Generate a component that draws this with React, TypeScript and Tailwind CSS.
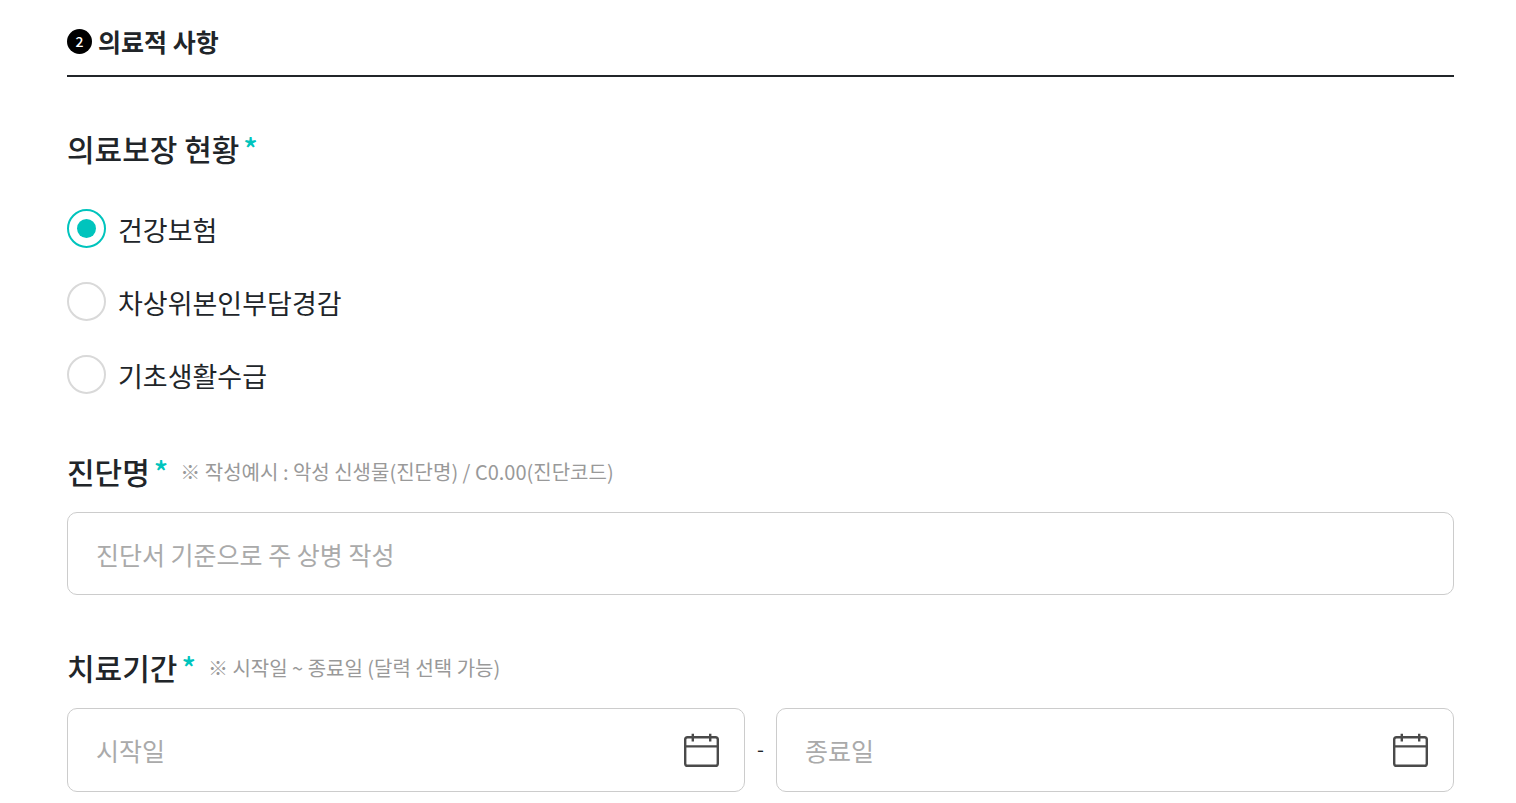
import { useState } from 'react';

const COVERAGE_OPTIONS = [
  { value: 'health', label: '건강보험' },
  { value: 'near-poor', label: '차상위본인부담경감' },
  { value: 'basic', label: '기초생활수급' },
];

function Required() {
  return <span className="ml-1 text-[#00c4bd]">*</span>;
}

function CalendarIcon() {
  return (
    <svg width="36" height="34" viewBox="0 0 36 34" fill="none" stroke="#4a4a4a" strokeWidth="2.4" aria-hidden="true">
      <rect x="1.2" y="4.2" width="32.6" height="28.6" rx="2.4" />
      <path d="M1 13.4H34M8.8 0.8V8.4M26.2 0.8V8.4" />
    </svg>
  );
}

function DateField({ id, placeholder }: { id: string; placeholder: string }) {
  const [value, setValue] = useState('');

  return (
    <div className="flex h-[84px] min-w-0 flex-1 items-center rounded-[10px] border border-[#ccc] pr-6 pl-7">
      <input
        id={id}
        type="text"
        aria-label={placeholder}
        placeholder={placeholder}
        value={value}
        onChange={(e) => setValue(e.target.value)}
        className="h-full min-w-0 flex-1 text-[25px] outline-none placeholder:text-[#aaa]"
      />
      <button type="button" aria-label={`${placeholder} 달력`}>
        <CalendarIcon />
      </button>
    </div>
  );
}

function App() {
  const [coverage, setCoverage] = useState('health');
  const [diagnosis, setDiagnosis] = useState('');

  return (
    <main className="bg-white pt-6 pr-[62px] pl-[67px] font-['Noto_Sans_CJK_KR',sans-serif] text-[#212529]">
      {/* 섹션 제목 */}
      <h2 className="flex h-[53px] items-start gap-[6px] border-b-2 border-[#212529] text-[25px] leading-[34px] font-bold">
        <span className="mt-[5px] flex size-[25px] items-center justify-center rounded-full bg-black pb-px text-sm font-medium text-white">
          2
        </span>
        의료적 사항
      </h2>

      {/* 의료보장 현황 */}
      <fieldset className="pt-[50px]">
        <legend className="contents">
          <span className="block text-[30px] leading-[42px] font-medium">
            의료보장 현황
            <Required />
          </span>
        </legend>
        <div className="mt-10 flex flex-col items-start gap-[34px]">
          {COVERAGE_OPTIONS.map((option) => (
            <label key={option.value} className="flex h-[39px] items-center gap-3 text-[27px]">
              <input
                type="radio"
                name="coverage"
                value={option.value}
                checked={coverage === option.value}
                onChange={() => setCoverage(option.value)}
                className="grid size-[39px] appearance-none place-items-center rounded-full border-2 border-[#d9d9d9] before:size-[19px] before:rounded-full checked:border-[#00c4bd] checked:before:bg-[#00c4bd]"
              />
              <span className="pt-[3px]">{option.label}</span>
            </label>
          ))}
        </div>
      </fieldset>

      {/* 진단명 */}
      <div className="pt-[56px]">
        <div className="flex h-[42px] items-center">
          <label htmlFor="diagnosis" className="text-[30px] leading-[42px] font-medium">
            진단명
            <Required />
          </label>
          <p className="ml-3 pt-px text-xl text-[#999]">※ 작성예시 : 악성 신생물(진단명) / C0.00(진단코드)</p>
        </div>
        <input
          id="diagnosis"
          type="text"
          placeholder="진단서 기준으로 주 상병 작성"
          value={diagnosis}
          onChange={(e) => setDiagnosis(e.target.value)}
          className="mt-5 h-[83px] w-full rounded-[10px] border border-[#ccc] px-7 text-[25px] outline-none placeholder:text-[#aaa]"
        />
      </div>

      {/* 치료기간 */}
      <div className="pt-[51px]">
        <div className="flex h-[42px] items-center">
          <label htmlFor="start-date" className="text-[30px] leading-[42px] font-medium">
            치료기간
            <Required />
          </label>
          <p className="ml-3 pt-px text-xl text-[#999]">※ 시작일 ~ 종료일 (달력 선택 가능)</p>
        </div>
        <div className="mt-5 flex items-center">
          <DateField id="start-date" placeholder="시작일" />
          <span className="w-[31px] pb-0.5 text-center text-xl">-</span>
          <DateField id="end-date" placeholder="종료일" />
        </div>
      </div>
    </main>
  );
}

export default App;
